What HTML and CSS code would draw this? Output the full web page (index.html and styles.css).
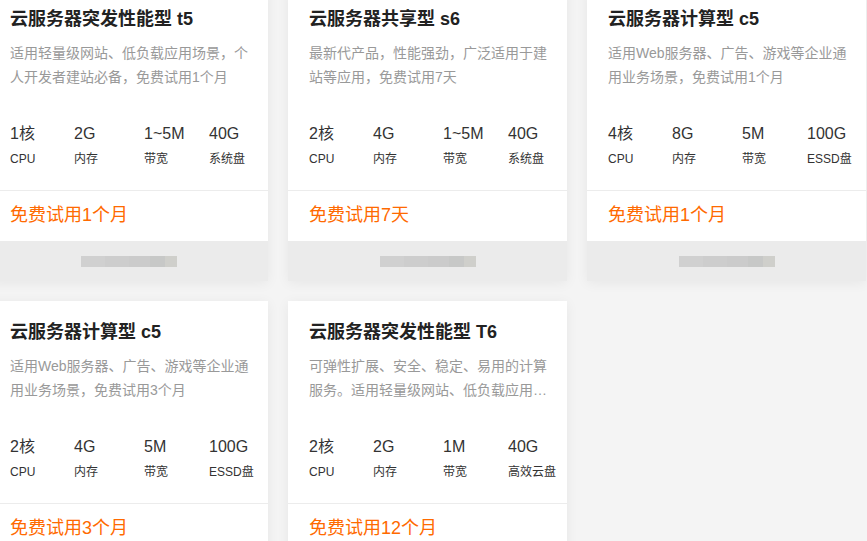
FILE: index.html
```html
<!DOCTYPE html>
<html lang="zh-CN">
<head>
<meta charset="utf-8">
<title>云服务器免费试用</title>
<link rel="stylesheet" href="styles.css">
</head>
<body>
<div class="grid">
  <div class="card">
    <div class="main">
      <div class="title">云服务器突发性能型 t5</div>
      <div class="desc">适用轻量级网站、低负载应用场景，个人开发者建站必备，免费试用1个月</div>
      <div class="specs">
        <div class="spec"><div class="val">1核</div><div class="lab">CPU</div></div>
        <div class="spec"><div class="val">2G</div><div class="lab">内存</div></div>
        <div class="spec"><div class="val">1~5M</div><div class="lab">带宽</div></div>
        <div class="spec"><div class="val">40G</div><div class="lab">系统盘</div></div>
      </div>
      <div class="trial">免费试用1个月</div>
    </div>
    <div class="foot"><div class="blur"></div></div>
  </div>
  <div class="card">
    <div class="main">
      <div class="title">云服务器共享型 s6</div>
      <div class="desc">最新代产品，性能强劲，广泛适用于建站等应用，免费试用7天</div>
      <div class="specs">
        <div class="spec"><div class="val">2核</div><div class="lab">CPU</div></div>
        <div class="spec"><div class="val">4G</div><div class="lab">内存</div></div>
        <div class="spec"><div class="val">1~5M</div><div class="lab">带宽</div></div>
        <div class="spec"><div class="val">40G</div><div class="lab">系统盘</div></div>
      </div>
      <div class="trial">免费试用7天</div>
    </div>
    <div class="foot"><div class="blur"></div></div>
  </div>
  <div class="card">
    <div class="main">
      <div class="title">云服务器计算型 c5</div>
      <div class="desc">适用Web服务器、广告、游戏等企业通用业务场景，免费试用1个月</div>
      <div class="specs">
        <div class="spec"><div class="val">4核</div><div class="lab">CPU</div></div>
        <div class="spec"><div class="val">8G</div><div class="lab">内存</div></div>
        <div class="spec"><div class="val">5M</div><div class="lab">带宽</div></div>
        <div class="spec"><div class="val">100G</div><div class="lab">ESSD盘</div></div>
      </div>
      <div class="trial">免费试用1个月</div>
    </div>
    <div class="foot"><div class="blur"></div></div>
  </div>
  <div class="card">
    <div class="main">
      <div class="title">云服务器计算型 c5</div>
      <div class="desc">适用Web服务器、广告、游戏等企业通用业务场景，免费试用3个月</div>
      <div class="specs">
        <div class="spec"><div class="val">2核</div><div class="lab">CPU</div></div>
        <div class="spec"><div class="val">4G</div><div class="lab">内存</div></div>
        <div class="spec"><div class="val">5M</div><div class="lab">带宽</div></div>
        <div class="spec"><div class="val">100G</div><div class="lab">ESSD盘</div></div>
      </div>
      <div class="trial">免费试用3个月</div>
    </div>
    <div class="foot"><div class="blur"></div></div>
  </div>
  <div class="card">
    <div class="main">
      <div class="title">云服务器突发性能型 T6</div>
      <div class="desc">可弹性扩展、安全、稳定、易用的计算服务。适用轻量级网站、低负载应用场景，免费试用12个月</div>
      <div class="specs">
        <div class="spec"><div class="val">2核</div><div class="lab">CPU</div></div>
        <div class="spec"><div class="val">2G</div><div class="lab">内存</div></div>
        <div class="spec"><div class="val">1M</div><div class="lab">带宽</div></div>
        <div class="spec"><div class="val">40G</div><div class="lab">高效云盘</div></div>
      </div>
      <div class="trial">免费试用12个月</div>
    </div>
    <div class="foot"><div class="blur"></div></div>
  </div>
</div>
</body>
</html>
```
FILE: styles.css
```css
html, body {
  margin: 0;
  padding: 0;
  background: #f4f4f4;
  overflow: hidden;
}
body {
  font-family: "Liberation Sans", Arial, "Noto Sans CJK SC", sans-serif;
  color: #333;
}
.grid {
  display: grid;
  grid-template-columns: repeat(3, 279px);
  column-gap: 20px;
  row-gap: 20px;
  margin: -12px 0 0 -11px;
}
.card {
  background: #fff;
  box-shadow: 0 2px 12px rgba(0, 0, 0, 0.06);
  display: flex;
  flex-direction: column;
}
.main {
  padding: 0 21px;
}
.title {
  padding-top: 19px;
  font-size: 18px;
  line-height: 24px;
  font-weight: bold;
  color: #222;
  white-space: nowrap;
}
.desc {
  margin-top: 10px;
  font-size: 14px;
  line-height: 24px;
  color: #999;
  height: 48px;
  overflow: hidden;
  display: -webkit-box;
  -webkit-line-clamp: 2;
  -webkit-box-orient: vertical;
  width: 242px;
}
.specs {
  display: grid;
  grid-template-columns: 64px 70px 65px auto;
  padding-top: 35px;
  padding-bottom: 23px;
}
.val {
  font-size: 16px;
  line-height: 20px;
  color: #333;
}
.lab {
  margin-top: 7px;
  font-size: 12px;
  line-height: 16px;
  color: #333;
  white-space: nowrap;
}
.trial {
  border-top: 1px solid #ececec;
  margin: 0 -21px;
  padding: 13px 21px 15px;
  font-size: 18px;
  line-height: 22px;
  color: #ff6a00;
}
.foot {
  background: #ebebeb;
  height: 40px;
  display: flex;
  align-items: center;
  justify-content: center;
}
.blur {
  width: 96px;
  height: 11px;
  margin-top: 1px;
  background: linear-gradient(90deg, #d0d0d0 0 25%, #cdcdcd 25% 50%, #cbcbcb 50% 72%, #c7c8c7 72% 87%, #cfcfcb 87% 100%);
}
```
